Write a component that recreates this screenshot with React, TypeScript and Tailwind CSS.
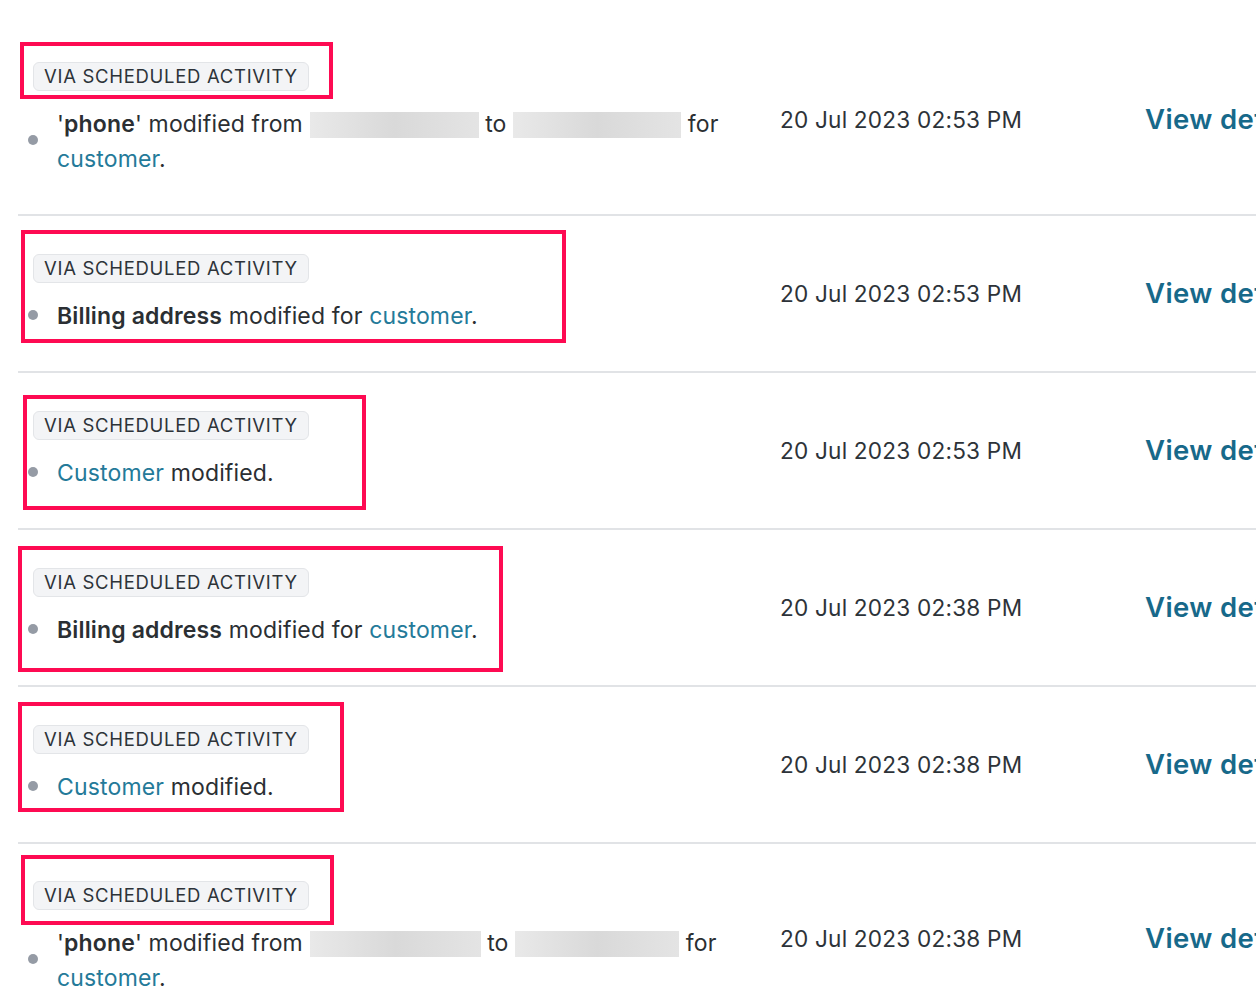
import type { ReactNode } from "react";

type Row = {
  body: ReactNode;
  date: string;
  pad: string;
  box: string;
};

function Blur({ w }: { w: string }) {
  return (
    <span
      className={`inline-block h-[26px] ${w} align-[-6px] bg-gradient-to-r from-[#e9e9e9] via-[#d9d9d9] to-[#e4e4e4] blur-[0.6px]`}
    />
  );
}

const Link = ({ children }: { children: ReactNode }) => (
  <span className="text-[#247a99]">{children}</span>
);

const rows: Row[] = [
  {
    body: (
      <>
        '<b className="font-semibold">phone</b>' modified from <Blur w="w-[169px]" /> to <Blur w="w-[168px]" /> for{" "}
        <Link>customer</Link>.
      </>
    ),
    date: "20 Jul 2023 02:53 PM",
    pad: "pt-[62px] pb-[37px]",
    box: "top-[42px] left-[2px] w-[313px] h-[57px]",
  },
  {
    body: (
      <>
        <b className="font-semibold">Billing address</b> modified for <Link>customer</Link>.
      </>
    ),
    date: "20 Jul 2023 02:53 PM",
    pad: "pt-[38px] pb-[37px]",
    box: "top-[14px] left-[3px] w-[545px] h-[113px]",
  },
  {
    body: (
      <>
        <Link>Customer</Link> modified.
      </>
    ),
    date: "20 Jul 2023 02:53 PM",
    pad: "pt-[38px] pb-[37px]",
    box: "top-[22px] left-[5px] w-[343px] h-[115px]",
  },
  {
    body: (
      <>
        <b className="font-semibold">Billing address</b> modified for <Link>customer</Link>.
      </>
    ),
    date: "20 Jul 2023 02:38 PM",
    pad: "pt-[38px] pb-[37px]",
    box: "top-[16px] left-0 w-[485px] h-[126px]",
  },
  {
    body: (
      <>
        <Link>Customer</Link> modified.
      </>
    ),
    date: "20 Jul 2023 02:38 PM",
    pad: "pt-[38px] pb-[37px]",
    box: "top-[15px] left-0 w-[326px] h-[110px]",
  },
  {
    body: (
      <>
        '<b className="font-semibold">phone</b>' modified from <Blur w="w-[171px]" /> to <Blur w="w-[164px]" /> for{" "}
        <Link>customer</Link>.
      </>
    ),
    date: "20 Jul 2023 02:38 PM",
    pad: "pt-[37px] pb-[38px]",
    box: "top-[11px] left-[3px] w-[313px] h-[70px]",
  },
];

export default function App() {
  return (
    <div className="h-[996px] w-[1256px] overflow-hidden bg-white font-['Inter','Noto_Sans',sans-serif] text-[#2b2f33]">
      {rows.map((r, i) => (
        <div
          key={i}
          className={`relative ml-[18px] flex items-center border-b-2 border-[#e1e3e6] ${r.pad}`}
        >
          <div className="w-[702px] shrink-0 pl-[10px]">
            <span className="ml-[5px] inline-flex h-[29px] items-center rounded-md border border-[#e3e5e8] bg-[#f3f4f6] px-[10px] text-[18.5px] tracking-[0.7px] text-[#2d3339]">
              VIA SCHEDULED ACTIVITY
            </span>
            <div className="mt-[16px] flex items-center gap-[19px]">
              <span className="-mt-[4px] h-[10px] w-[10px] shrink-0 rounded-full bg-[#959ba5]" />
              <p className="text-[23px] leading-[35px] tracking-[0.15px]">{r.body}</p>
            </div>
          </div>
          <div className="ml-[60px] w-[365px] shrink-0 text-[22.6px] tracking-[0.2px] text-[#2d3339]">
            {r.date}
          </div>
          <a className="whitespace-nowrap text-[27.5px] font-semibold tracking-[0.4px] text-[#17698a]">View details</a>
          <div className={`pointer-events-none absolute border-4 border-[#fe0a52] ${r.box}`} />
        </div>
      ))}
    </div>
  );
}
